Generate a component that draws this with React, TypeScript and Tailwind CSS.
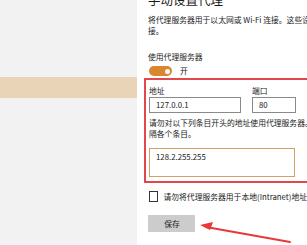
import React from 'react'

const font = { fontFamily: '"Noto Sans CJK SC", "Noto Sans", sans-serif' }

const App = () => {
  return (
    <div className="relative flex h-[245px] w-[307px] overflow-hidden bg-white text-[#1a1a1a]" style={font}>
      {/* left nav */}
      <div className="flex w-[137px] shrink-0 flex-col bg-[#f2f2f2]">
        <div className="h-[77px]" />
        <div className="h-[21px] bg-[#e9d4b7]" />
      </div>

      {/* settings pane */}
      <div className="flex min-w-0 flex-1 flex-col pl-[11px]">
        <p className="-mt-[9px] whitespace-nowrap text-[12.5px] leading-[18px]">手动设置代理</p>
        <div className="mt-[5px] text-[7.8px] leading-[11px] whitespace-nowrap">
          <p>将代理服务器用于以太网或 Wi-Fi 连接。这些设置不适用于 VPN 连</p>
          <p>接。</p>
        </div>

        <p className="mt-[15px] text-[7.8px] leading-[11px]">使用代理服务器</p>
        <div className="mt-[4px] flex items-center gap-[8px] pl-[1px]">
          <div className="flex h-[10px] w-[23px] items-center justify-end rounded-full bg-[#d9862f] pr-[2px]">
            <div className="h-[5px] w-[5px] rounded-full bg-white" />
          </div>
          <span className="text-[7.8px] leading-[10px]">开</span>
        </div>

        {/* highlighted block */}
        <div className="-ml-[4px] mt-[2px] w-[175px] border-2 border-[#e2474b] pb-[4px] pl-[3px] pt-[6px]">
          <div className="flex gap-[11px]">
            <div className="flex flex-col">
              <span className="text-[7.8px] leading-[10px]">地址</span>
              <div className="mt-[1px] flex h-[16px] w-[92px] items-center border border-[#8a8a8a] pl-[6px] text-[7.8px]">127.0.0.1</div>
            </div>
            <div className="flex flex-col">
              <span className="text-[7.8px] leading-[10px]">端口</span>
              <div className="mt-[1px] flex h-[16px] w-[44px] items-center border border-[#8a8a8a] pl-[6px] text-[7.8px]">80</div>
            </div>
          </div>
          <div className="mt-[4px] whitespace-nowrap text-[7.8px] leading-[11px]">
            <p>请勿对以下列条目开头的地址使用代理服务器。请使用分号(;)来分</p>
            <p>隔各个条目。</p>
          </div>
          <div className="mt-[9px] h-[29px] w-[146px] border border-[#d3a064] pl-[6px] pt-[2px] text-[7.8px] leading-[11px]">
            128.2.255.255
          </div>
        </div>

        <div className="mt-[8px] flex items-center gap-[5px] pl-[1px]">
          <div className="h-[11px] w-[11px] border border-[#333]" />
          <span className="whitespace-nowrap text-[7.8px] leading-[11px]">请勿将代理服务器用于本地(Intranet)地址</span>
        </div>

        <button className="mt-[13px] flex h-[17px] w-[47px] items-center justify-center bg-[#cccccc] pl-[1px] text-[7.8px]">
          保存
        </button>
      </div>

      {/* annotation arrow */}
      <svg className="absolute left-0 top-0" width="307" height="245" viewBox="0 0 307 245">
        <path d="M290 242 L206 227" stroke="#e8383a" strokeWidth="2" strokeLinecap="round" />
        <path d="M200 225 L213 222 L210 230 Z" fill="#e8383a" />
      </svg>
    </div>
  )
}

export default App
